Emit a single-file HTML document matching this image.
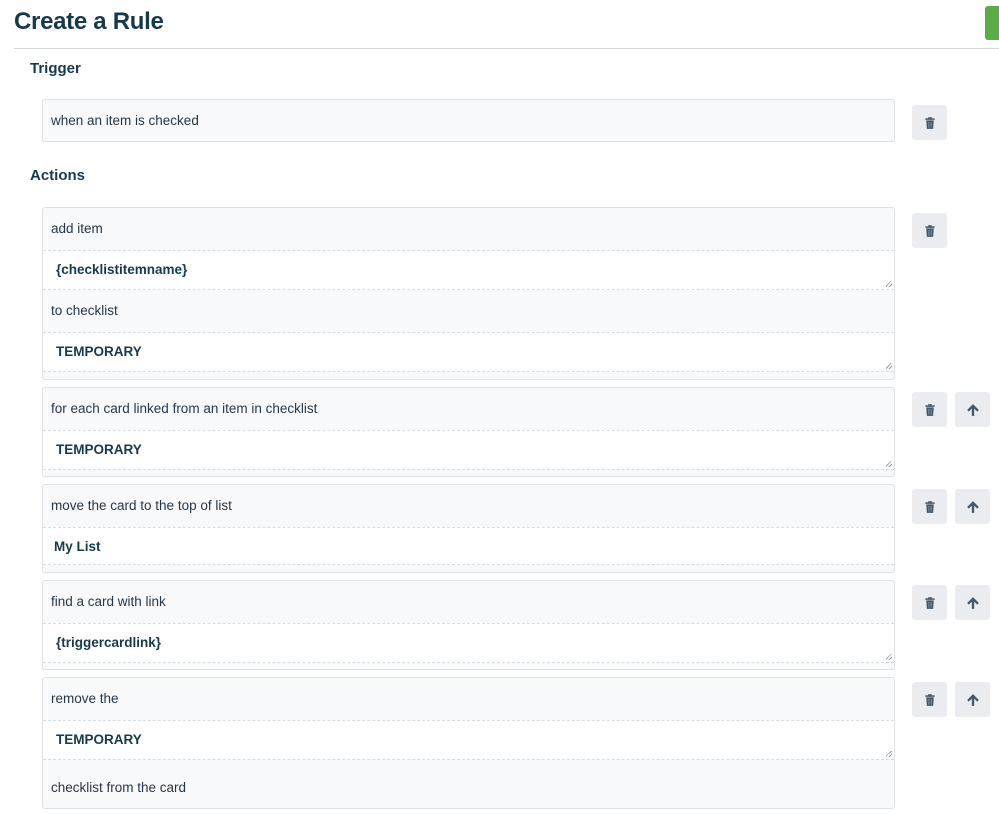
<!DOCTYPE html>
<html><head><style>
*{box-sizing:border-box;margin:0;padding:0}
body{width:999px;height:814px;background:#fff;font-family:"Liberation Sans",Arial,sans-serif;color:#253746;position:relative;overflow:hidden}
h1{position:absolute;left:14px;top:8px;font-size:24px;font-weight:bold;color:#17394d;letter-spacing:-0.3px}
.hr{position:absolute;left:14px;right:0;top:48px;border-top:1px solid #d6d9dc}
.green{position:absolute;left:985px;top:6px;width:30px;height:34px;background:#5aac44;border-radius:3px}
h3{position:absolute;left:30px;font-size:15px;font-weight:bold;color:#17394d}
.box{position:absolute;left:42px;width:853px;background:#f8f9fa;border:1px solid #dfe1e4;border-radius:3px;overflow:hidden}
.lbl{height:42px;line-height:41px;padding-left:8px;font-size:13.5px;color:#253746}
.ta{height:40px;line-height:38px;background:#fff;border-top:1px dashed #d9dcdf;border-bottom:1px dashed #d9dcdf;padding-left:13px;font-size:13.5px;font-weight:bold;color:#17394d;position:relative}
.ta.r::after{content:"";position:absolute;right:2px;bottom:2px;width:6px;height:6px;background:linear-gradient(135deg,transparent 40%,#999 40%,#999 50%,transparent 50%,transparent 70%,#999 70%,#999 80%,transparent 80%)}
.btn{position:absolute;width:35px;height:35px;background:#ebecf0;border-radius:3px;display:flex;align-items:center;justify-content:center}
</style></head><body>
<h1>Create a Rule</h1>
<div class="green"></div>
<div class="hr"></div>
<h3 style="top:60px">Trigger</h3>
<div class="box" style="top:99px;height:43px"><div class="lbl">when an item is checked</div></div>
<h3 style="top:167px">Actions</h3>

<div class="box" style="top:207px;height:173px">
<div class="lbl">add item</div><div class="ta r">{checklistitemname}</div>
<div class="lbl">to checklist</div><div class="ta r">TEMPORARY</div></div>

<div class="box" style="top:387px;height:90px">
<div class="lbl">for each card linked from an item in checklist</div><div class="ta r">TEMPORARY</div></div>

<div class="box" style="top:484px;height:89px">
<div class="lbl">move the card to the top of list</div><div class="ta" style="padding-left:11px;height:38px">My List</div></div>

<div class="box" style="top:580px;height:90px">
<div class="lbl">find a card with link</div><div class="ta r">{triggercardlink}</div></div>

<div class="box" style="top:677px;height:132px">
<div class="lbl">remove the</div><div class="ta r">TEMPORARY</div>
<div class="lbl" style="height:50px;line-height:56px">checklist from the card</div></div>

<svg width="0" height="0" style="position:absolute"><defs>
<symbol id="t" viewBox="0 0 12 12"><rect x="2" y="2" width="8" height="1.3" fill="#42596b"/><rect x="4.5" y="1" width="3" height="1.5" fill="#42596b"/><path d="M2.8 3.8h6.4l-.5 7.2h-5.4z" fill="#42596b"/><path d="M4.8 5v5M6 5v5M7.2 5v5" stroke="#8a9aa6" stroke-width=".5"/></symbol>
<symbol id="u" viewBox="0 0 12 12"><path d="M6 1L1 6l1.4 1.4L5 4.8V11h2V4.8l2.6 2.6L11 6z" fill="#42596b"/></symbol>
</defs></svg>

<div class="btn" style="left:912px;top:105px"><svg width="14" height="14"><use href="#t"/></svg></div>
<div class="btn" style="left:912px;top:213px"><svg width="14" height="14"><use href="#t"/></svg></div>
<div class="btn" style="left:912px;top:392px"><svg width="14" height="14"><use href="#t"/></svg></div>
<div class="btn" style="left:955px;top:392px"><svg width="14" height="14"><use href="#u"/></svg></div>
<div class="btn" style="left:912px;top:489px"><svg width="14" height="14"><use href="#t"/></svg></div>
<div class="btn" style="left:955px;top:489px"><svg width="14" height="14"><use href="#u"/></svg></div>
<div class="btn" style="left:912px;top:585px"><svg width="14" height="14"><use href="#t"/></svg></div>
<div class="btn" style="left:955px;top:585px"><svg width="14" height="14"><use href="#u"/></svg></div>
<div class="btn" style="left:912px;top:682px"><svg width="14" height="14"><use href="#t"/></svg></div>
<div class="btn" style="left:955px;top:682px"><svg width="14" height="14"><use href="#u"/></svg></div>
</body></html>
